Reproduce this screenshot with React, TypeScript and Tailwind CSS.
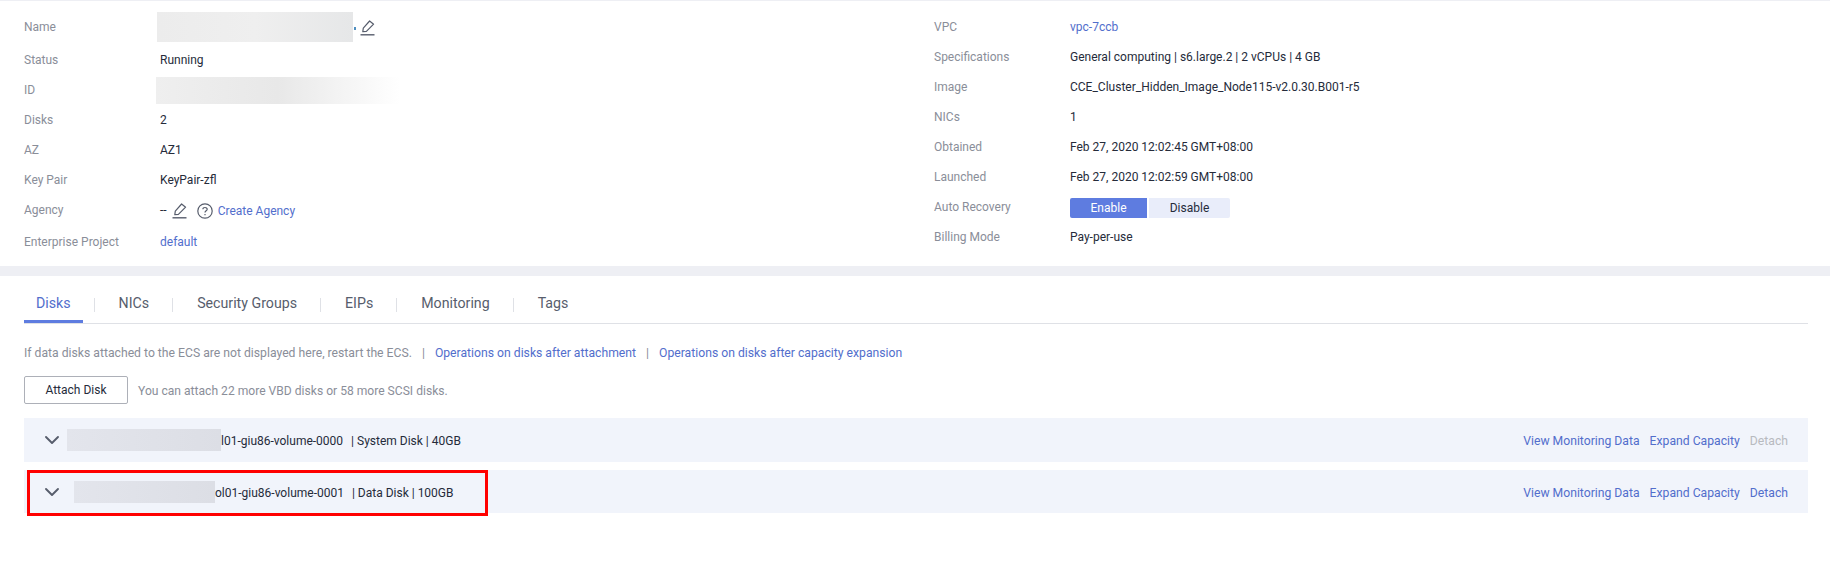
import { ChevronDown } from 'lucide-react';

const LEFT_ROWS = [
  { label: 'Disks', value: '2' },
  { label: 'AZ', value: 'AZ1' },
  { label: 'Key Pair', value: 'KeyPair-zfl' },
];

const RIGHT_ROWS = [
  { label: 'Specifications', value: 'General computing | s6.large.2 | 2 vCPUs | 4 GB' },
  { label: 'Image', value: 'CCE_Cluster_Hidden_Image_Node115-v2.0.30.B001-r5' },
  { label: 'NICs', value: '1' },
  { label: 'Obtained', value: 'Feb 27, 2020 12:02:45 GMT+08:00' },
  { label: 'Launched', value: 'Feb 27, 2020 12:02:59 GMT+08:00' },
];

const TABS = ['Disks', 'NICs', 'Security Groups', 'EIPs', 'Monitoring', 'Tags'];

function PencilIcon() {
  return (
    <svg width="15" height="16" viewBox="0 0 15 16" fill="none" stroke="#575d6c" strokeWidth="1.2">
      <path d="M2.8 11.6 L3.3 8.2 L9.6 1 L13.6 4.2 L6.4 11.4 Z" strokeLinejoin="round" />
      <path d="M0.5 14.8 H14.5" strokeWidth="1.4" />
    </svg>
  );
}

function HelpIcon() {
  return (
    <svg width="16" height="16" viewBox="0 0 16 16" fill="none" stroke="#575d6c" strokeWidth="1.2">
      <circle cx="8" cy="8" r="7.2" />
      <path d="M5.9 6.3 C5.9 3.9 10.2 3.9 10.2 6.3 C10.2 7.9 8 7.8 8 9.6" />
      <path d="M8 11 V12.2" />
    </svg>
  );
}

function InfoRow({ label, children, className = '' }: { label: string; children: React.ReactNode; className?: string }) {
  return (
    <div className={`flex h-[30px] items-center ${className}`}>
      <div className="w-[136px] shrink-0 text-[#8a8e99]">{label}</div>
      {children}
    </div>
  );
}

function DiskRow({
  heightClass,
  blurClass,
  name,
  meta,
  detachClass,
  boxed,
}: {
  heightClass: string;
  blurClass: string;
  name: string;
  meta: string;
  detachClass: string;
  boxed?: boolean;
}) {
  return (
    <div className={`relative flex items-center bg-[#f1f4fb] pl-[16px] pr-5 ${heightClass}`}>
      <ChevronDown size={24} strokeWidth={1.9} className="shrink-0 text-[#575d6c]" />
      <div className={`h-[22px] bg-gradient-to-r from-[#e3e5ec] to-[#dcdee5] ${blurClass}`} />
      <div className="whitespace-pre pt-[2px] text-[#252b3a]">{name}</div>
      <div className="ml-2 pt-[2px] text-[#252b3a]">{meta}</div>
      <div className="ml-auto flex gap-[10px] pt-[2px] text-[12.2px] text-[#526ecc]">
        <span>View Monitoring Data</span>
        <span>Expand Capacity</span>
        <span className={detachClass}>Detach</span>
      </div>
      {boxed && <div className="absolute left-[3px] top-0 h-[46px] w-[461px] border-[3px] border-[#ff0000]" />}
    </div>
  );
}

export default function App() {
  return (
    <div className="h-[561px] w-[1830px] overflow-hidden bg-white font-['Roboto',sans-serif] text-[12px] leading-[18px] text-[#252b3a]">
      <div className="flex h-[266px] border-t border-[#eeeff4] pt-[11px]">
        <div className="w-[934px] pl-6">
          <InfoRow label="Name" className="mb-[3px]">
            <div className="-ml-[3px] h-[30px] w-[196px] bg-gradient-to-r from-[#ececec] via-[#efefef] to-[#e6e7e8]" />
            <div className="ml-px mt-[3px] h-[3px] w-[2px] bg-[#4f8fc0]" />
            <span className="ml-[4px] mt-[2px]">
              <PencilIcon />
            </span>
          </InfoRow>
          <InfoRow label="Status">Running</InfoRow>
          <InfoRow label="ID">
            <div className="-ml-[4px] h-[27px] w-[244px] bg-gradient-to-r from-[#efefef] via-[#e8e8e8] to-white" />
          </InfoRow>
          {LEFT_ROWS.map((r) => (
            <InfoRow key={r.label} label={r.label}>
              {r.value}
            </InfoRow>
          ))}
          <InfoRow label="Agency" className="mb-[2px]">
            <span>--</span>
            <span className="ml-[5px] mt-[1px]">
              <PencilIcon />
            </span>
            <span className="ml-[10px] mt-[1px]">
              <HelpIcon />
            </span>
            <span className="ml-[5px] mt-[1px] text-[#526ecc]">Create Agency</span>
          </InfoRow>
          <InfoRow label="Enterprise Project">
            <span className="text-[#526ecc]">default</span>
          </InfoRow>
        </div>
        <div className="flex-1">
          <InfoRow label="VPC">
            <span className="text-[#526ecc]">vpc-7ccb</span>
          </InfoRow>
          {RIGHT_ROWS.map((r) => (
            <InfoRow key={r.label} label={r.label}>
              {r.value}
            </InfoRow>
          ))}
          <InfoRow label="Auto Recovery">
            <div className="mt-[2px] flex gap-[2px]">
              <button className="h-5 w-[77px] rounded-l-[2px] bg-[#5e7ce0] text-white">Enable</button>
              <button className="h-5 w-[81px] rounded-r-[2px] bg-[#e9edfa] text-[#252b3a]">Disable</button>
            </div>
          </InfoRow>
          <InfoRow label="Billing Mode">Pay-per-use</InfoRow>
        </div>
      </div>
      <div className="h-[10px] bg-[#eeeff4]" />
      <div className="pl-[24px] pr-[22px]">
        <div className="flex h-[48px] items-end border-b border-[#dfe1e6] text-[14.2px]">
          {TABS.map((t, i) => (
            <div key={t} className="flex items-center">
              {i > 0 && <div className="ml-[11px] mr-[12px] h-[14px] w-px bg-[#dfe1e6]" />}
              <div
                className={
                  i === 0
                    ? 'h-[36px] border-b-[3px] border-[#5e7ce0] px-[12px] pt-[7px] text-[#526ecc]'
                    : 'h-[36px] px-[12px] pt-[7px] text-[#575d6c]'
                }
              >
                {t}
              </div>
            </div>
          ))}
        </div>
        <div className="mt-[20px] flex text-[12.2px] text-[#8a8e99]">
          <span>If data disks attached to the ECS are not displayed here, restart the ECS.</span>
          <span className="mx-[10px]">|</span>
          <span className="text-[#526ecc]">Operations on disks after attachment</span>
          <span className="mx-[10px]">|</span>
          <span className="text-[#526ecc]">Operations on disks after capacity expansion</span>
        </div>
        <div className="mt-[14px] flex items-center">
          <button className="h-[28px] w-[104px] rounded-[2px] border border-[#adb0b8] text-[#252b3a]">Attach Disk</button>
          <span className="ml-[10px] mt-[2px] text-[12.1px] text-[#8a8e99]">You can attach 22 more VBD disks or 58 more SCSI disks.</span>
        </div>
        <div className="mt-[14px] flex flex-col gap-[8px]">
          <DiskRow
            heightClass="h-[44px]"
            blurClass="ml-[3px] w-[154px]"
            name="l01-giu86-volume-0000"
            meta="| System Disk | 40GB"
            detachClass="text-[#b8babf]"
          />
          <DiskRow
            heightClass="h-[43px]"
            blurClass="ml-[10px] w-[141px]"
            name="ol01-giu86-volume-0001"
            meta="| Data Disk | 100GB"
            detachClass=""
            boxed
          />
        </div>
      </div>
    </div>
  );
}
